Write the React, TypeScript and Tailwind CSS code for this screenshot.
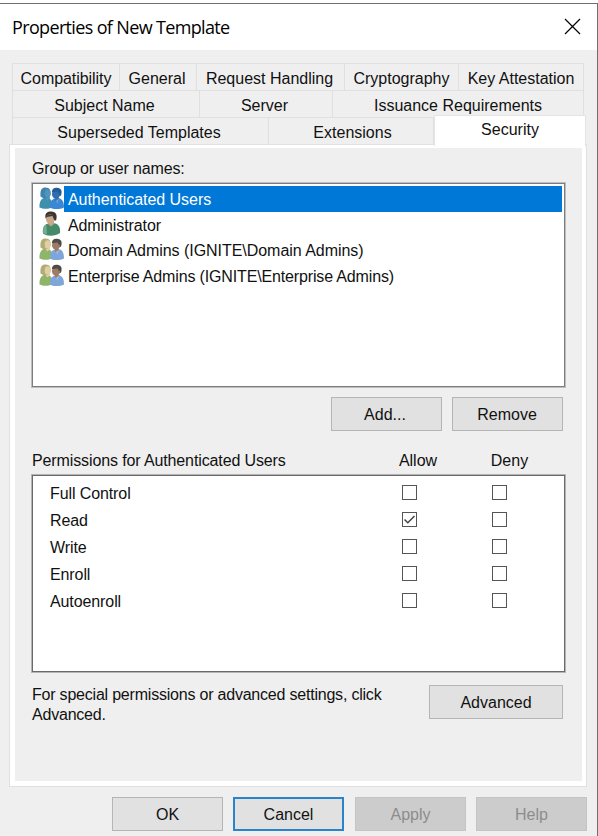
import { useState } from 'react'
import type { ReactNode } from 'react'

type PersonColors = { hair: string; skin: string; shirt: string }

const FairWoman: PersonColors = { hair: '#b3ab74', skin: '#e0cfa4', shirt: '#8fb56a' }
const DarkMan: PersonColors = { hair: '#4d4a48', skin: '#a07a64', shirt: '#7fa6d8' }

const PairIcon = ({ left, right }: { left: PersonColors; right: PersonColors }) => (
  <svg width="25" height="24" viewBox="0 0 25 24" className="-mt-px shrink-0">
    <path d="M0.500 21.500 C0 15 3 11.500 7 11.500 C11 11.500 13.500 14 14 21 C10 23.500 4 23 0.500 21.500 Z" fill={left.shirt} />
    <path d="M6 10 L10.500 9 L11 12.500 L8 14.500 Z" fill={left.skin} />
    <path d="M1.500 10.500 C1 4 2.500 1.500 6.500 1.500 C11 1.500 12 4.500 11.500 9 C9 12.500 5 13.500 1.500 10.500 Z" fill={left.hair} />
    <ellipse cx="8.600" cy="7.400" rx="2.900" ry="4.200" fill={left.skin} />
    <path d="M11 21.500 C10.500 15.500 13 12.500 18 12 C22.500 12 25 14.500 25 21.500 C21 23.500 14 23.500 11 21.500 Z" fill={right.shirt} />
    <path d="M15.500 11 L19.500 10.500 L19.500 13.500 L16.500 15 Z" fill={right.skin} />
    <path d="M13 6 C13 2.500 15 1.500 18 1.700 C22.500 2 23.500 5 22 9.500 C20 11.500 16 9 13 6 Z" fill={right.hair} />
    <ellipse cx="17" cy="8.200" rx="4" ry="4.400" fill={right.skin} />
    <path d="M13 6 C13.500 3 20 2 21.500 7 L19.800 8 L18.800 5.600 Z" fill={right.hair} />
    <path d="M17.500 14 L20 12.800 L18 18 Z" fill="#ffffff" opacity="0.3" />
  </svg>
)

const PersonIcon = () => (
  <svg width="25" height="25" viewBox="0 0 25 25" className="-mt-px shrink-0">
    <path d="M4 22.500 C3 16 6 12.800 10 12.500 L15 12.300 C19.500 13 21.500 16 21 22 C16 25.500 8 25.500 4 22.500 Z" fill="#458b6a" />
    <path d="M4 22 C4 17 5 14.800 7.500 14 L8 23.800 Z" fill="#72ad90" />
    <path d="M9 10 L15 9.500 L15 13 L12 15.500 L9 13 Z" fill="#c4a284" />
    <path d="M6.500 7 C5.500 2 8.500 0.500 12 0.500 C17.500 0.500 18.500 4.500 17 9.500 L8 9 Z" fill="#3a3530" />
    <ellipse cx="11.200" cy="8.200" rx="4.200" ry="4.800" fill="#c9a98a" />
    <path d="M6.700 6.500 C8 3 15.500 2 16.500 8.500 L15 8.500 L13.500 5 L7.500 6 Z" fill="#3a3530" />
  </svg>
)

const groupIcon = <PairIcon left={FairWoman} right={DarkMan} />
const selectedGroupIcon = (
  <PairIcon
    left={{ hair: '#3f83ae', skin: '#4f94bb', shirt: '#3f90ae' }}
    right={{ hair: '#205c98', skin: '#2f6fb0', shirt: '#3a88d4' }}
  />
)

const users = [
  { name: 'Authenticated Users', icon: selectedGroupIcon, text: 'pt-[2px] bg-[#0078d7] text-white tracking-[-0.05px]' },
  { name: 'Administrator', icon: <PersonIcon />, text: 'pt-[3px] tracking-[-0.1px]' },
  { name: 'Domain Admins (IGNITE\\Domain Admins)', icon: groupIcon, text: 'pt-[3px] tracking-[-0.04px]' },
  { name: 'Enterprise Admins (IGNITE\\Enterprise Admins)', icon: groupIcon, text: 'pt-[3px] tracking-[-0.15px]' },
]

const permissions = ['Full Control', 'Read', 'Write', 'Enroll', 'Autoenroll']

const Tab = ({ className, children }: { className: string; children: ReactNode }) => (
  <button className={`h-[27px] border-t border-r border-[#e0e0e0] pt-[3px] text-center whitespace-nowrap ${className}`}>
    {children}
  </button>
)

const Button = ({ className, children }: { className: string; children: ReactNode }) => (
  <button className={`flex h-[34px] items-center justify-center ${className}`}>{children}</button>
)

const Checkbox = ({ checked, onChange }: { checked: boolean; onChange: () => void }) => (
  <button onClick={onChange} className="flex h-[15px] w-[15px] items-center justify-center border border-[#555555] bg-white">
    {checked && (
      <svg width="13" height="13" viewBox="0 0 13 13" fill="none" stroke="#444444" strokeWidth="1.500">
        <path d="M1.500 6.500 L4.800 9.800 L11.500 3" />
      </svg>
    )}
  </button>
)

const App = () => {
  const [checked, setChecked] = useState<string[]>(['Read-allow'])

  const toggle = (key: string) => {
    setChecked(checked.includes(key) ? checked.filter((k) => k !== key) : [...checked, key])
  }

  return (
    <div className="h-[836px] w-[598px] overflow-hidden bg-white pt-[3px] font-['Liberation_Sans',Arial,sans-serif] text-[16px] leading-[20px] text-[#111111]">
      <div className="flex h-[833px] flex-col border-t border-r border-[#6f6f73] bg-[#efefef]">
        <div className="flex h-[46px] shrink-0 items-center justify-between bg-white pr-[16px] pl-[12px]">
          <span className="font-['Open_Sans',sans-serif] text-[18px] tracking-[-0.65px] text-black">
            Properties of New Template
          </span>
          <svg width="17" height="17" viewBox="0 0 17 17" stroke="#000000" strokeWidth="1.200" className="-mt-[2px]">
            <path d="M1 1 L16 16 M16 1 L1 16" />
          </svg>
        </div>

        <div className="mt-[13px] ml-[12px] w-[572px] border-l border-[#e0e0e0]">
          <div className="flex">
            <Tab className="w-[107px] tracking-[-0.05px]">Compatibility</Tab>
            <Tab className="w-[77px] pr-[2px]">General</Tab>
            <Tab className="w-[148px] pr-[2px]">Request Handling</Tab>
            <Tab className="w-[114px]">Cryptography</Tab>
            <Tab className="w-[125px]">Key Attestation</Tab>
          </div>
          <div className="flex">
            <Tab className="w-[187px] pr-[3px]">Subject Name</Tab>
            <Tab className="w-[133px] pr-[3px]">Server</Tab>
            <Tab className="w-[251px]">Issuance Requirements</Tab>
          </div>
          <div className="flex">
            <Tab className="w-[256px] pr-[3px]">Superseded Templates</Tab>
            <Tab className="w-[165px] pl-[3px]">Extensions</Tab>
            <button className="relative z-10 -mt-[2px] -mr-[2px] -mb-[2px] flex-1 border border-b-0 border-[#e4e4e4] bg-white pb-[2px]">
              Security
            </button>
          </div>
        </div>

        <div className="ml-[9px] h-[643px] w-[578px] shrink-0 border border-[#e0e0e0]">
          <div className="h-[641px] border-[5px] border-t-[3px] border-r-[4px] border-white pr-[16px] pl-[17px]">
            <p className="pt-[11px] tracking-[-0.15px]">Group or user names:</p>

            <ul className="mt-[4px] h-[204px] w-[533px] border border-[#7a7d82] bg-white pt-[2px] shadow-[0_0_0_1px_#bcbdbf]">
              {users.map((user) => (
                <li key={user.name} className="flex h-[25.500px] items-center pr-[2px] pl-[6px]">
                  {user.icon}
                  <span className={`flex h-full flex-1 items-center pl-[4px] ${user.text}`}>{user.name}</span>
                </li>
              ))}
            </ul>

            <div className="mt-[10px] flex justify-end gap-[10px] pr-[3px]">
              <Button className="w-[111px] border border-[#b5b5b5] bg-[#e1e1e1] pr-[3px] pt-[1px]">Add...</Button>
              <Button className="w-[111px] border border-[#b5b5b5] bg-[#e1e1e1] pr-[1px] pt-[1px]">Remove</Button>
            </div>

            <div className="mt-[20px] flex">
              <span className="w-[341px] tracking-[-0.12px]">Permissions for Authenticated Users</span>
              <span className="w-[90px] text-center">Allow</span>
              <span className="w-[93px] text-center">Deny</span>
            </div>

            <div className="mt-[4px] h-[197px] w-[533px] border border-[#6a6a6a] bg-white pt-[3px] pl-[17px] shadow-[0_0_0_1px_#b4b4b4]">
              {permissions.map((name) => (
                <div key={name} className="flex h-[27px] items-center">
                  <span className="w-[352px] pt-[2px] tracking-[-0.1px]">{name}</span>
                  <span className="w-[90px]">
                    <Checkbox checked={checked.includes(`${name}-allow`)} onChange={() => toggle(`${name}-allow`)} />
                  </span>
                  <Checkbox checked={checked.includes(`${name}-deny`)} onChange={() => toggle(`${name}-deny`)} />
                </div>
              ))}
            </div>

            <div className="mt-[13px] flex justify-between pr-[3px]">
              <p className="w-[370px] tracking-[-0.21px]">For special permissions or advanced settings, click Advanced.</p>
              <Button className="w-[134px] border border-[#b5b5b5] bg-[#e1e1e1] pt-[1px]">Advanced</Button>
            </div>
          </div>
        </div>

        <div className="mt-[10px] flex gap-[10px] pl-[112px]">
          <Button className="w-[111px] border border-[#b5b5b5] bg-[#e1e1e1] pt-[2px]">OK</Button>
          <Button className="w-[111px] border-2 border-[#2a84cb] bg-[#e1e1e1] pt-[2px]">Cancel</Button>
          <Button className="ml-px w-[111px] border border-[#c4c4c4] bg-[#cccccc] pt-[2px] text-[#8c8c8c]">Apply</Button>
          <Button className="w-[111px] border border-[#c4c4c4] bg-[#cccccc] pt-[2px] text-[#8c8c8c]">Help</Button>
        </div>
      </div>
    </div>
  )
}

export default App
